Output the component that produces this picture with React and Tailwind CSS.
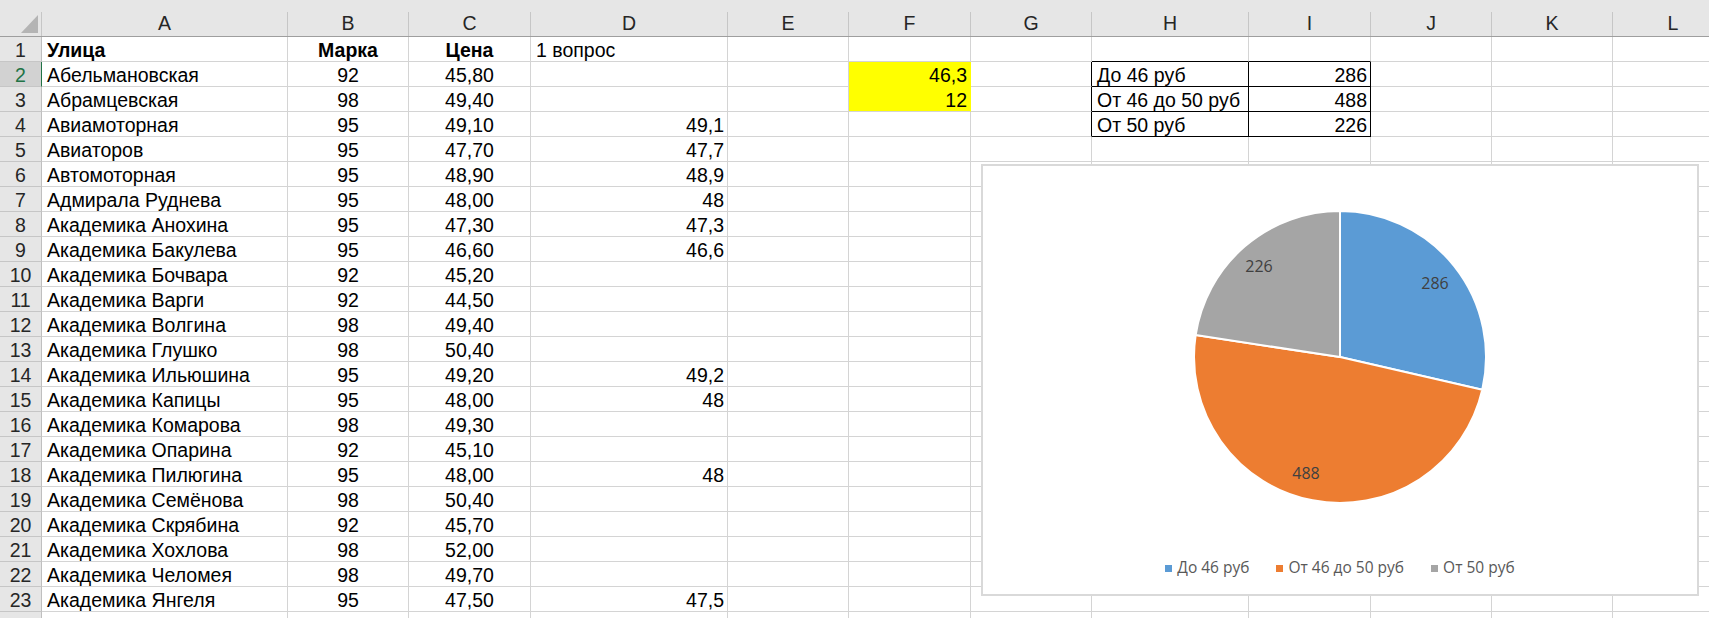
import React from "react";

const cols = ["A", "B", "C", "D", "E", "F", "G", "H", "I", "J", "K", "L"];

const rows = [
    ["Улица", "Марка", "Цена", "1 вопрос"],
    ["Абельмановская", "92", "45,80", ""],
    ["Абрамцевская", "98", "49,40", ""],
    ["Авиамоторная", "95", "49,10", "49,1"],
    ["Авиаторов", "95", "47,70", "47,7"],
    ["Автомоторная", "95", "48,90", "48,9"],
    ["Адмирала Руднева", "95", "48,00", "48"],
    ["Академика Анохина", "95", "47,30", "47,3"],
    ["Академика Бакулева", "95", "46,60", "46,6"],
    ["Академика Бочвара", "92", "45,20", ""],
    ["Академика Варги", "92", "44,50", ""],
    ["Академика Волгина", "98", "49,40", ""],
    ["Академика Глушко", "98", "50,40", ""],
    ["Академика Ильюшина", "95", "49,20", "49,2"],
    ["Академика Капицы", "95", "48,00", "48"],
    ["Академика Комарова", "98", "49,30", ""],
    ["Академика Опарина", "92", "45,10", ""],
    ["Академика Пилюгина", "95", "48,00", "48"],
    ["Академика Семёнова", "98", "50,40", ""],
    ["Академика Скрябина", "92", "45,70", ""],
    ["Академика Хохлова", "98", "52,00", ""],
    ["Академика Челомея", "98", "49,70", ""],
    ["Академика Янгеля", "95", "47,50", "47,5"],
    ["", "", "", ""],
];

const extra = {
    "2-F": "46,3",
    "3-F": "12",
    "2-H": "До 46 руб",
    "3-H": "От 46 до 50 руб",
    "4-H": "От 50 руб",
    "2-I": "286",
    "3-I": "488",
    "4-I": "226",
};

const legend = [
    { label: "До 46 руб", color: "bg-[#5b9bd5]" },
    { label: "От 46 до 50 руб", color: "bg-[#ed7d31]" },
    { label: "От 50 руб", color: "bg-[#a5a5a5]" },
];

const gridCols = "grid grid-cols-[42px_246px_121px_122px_197px_121px_122px_121px_157px_122px_121px_121px_121px]";

const cellText = (r, c) => {
    const row = rows[r - 1];
    if (c === "A") return row[0];
    if (c === "B") return row[1];
    if (c === "C") return row[2];
    if (c === "D") return row[3];
    return extra[`${r}-${c}`] || "";
};

const cellClass = (r, c) => {
    const inTable = r >= 2 && r <= 4 && (c === "H" || c === "I");
    const yellow = (r === 2 || r === 3) && c === "F";
    let right = "border-r-[#d4d4d4]";
    let bottom = "border-b-[#d4d4d4]";
    if (inTable) {
        right = "border-r-black";
        bottom = "border-b-black";
    }
    if (c === "G" && r >= 2 && r <= 4) right = "border-r-black";
    if (r === 1 && (c === "H" || c === "I")) bottom = "border-b-black";
    if (yellow) {
        right = "border-r-[#ffff00]";
        if (r === 2) bottom = "border-b-[#ffff00]";
    }

    let align = "justify-start pl-[5px]";
    if (c === "B" || c === "C") align = "justify-center";
    if (c === "D" && r > 1) align = "justify-end pr-[3px]";
    if (c === "F" || c === "I") align = "justify-end pr-[3px]";

    const bold = r === 1 && (c === "A" || c === "B" || c === "C") ? "font-bold" : "";
    const bg = yellow ? "bg-[#ffff00]" : "bg-white";

    return `h-[25px] border-r border-b ${right} ${bottom} ${bg} ${align} ${bold} flex items-end overflow-hidden whitespace-nowrap leading-[21px]`;
};

const PieChart = () => {
    return (
        <svg width="714" height="385" viewBox="0 0 714 385">
            <path d="M357,191 L357,45 A146,146 0 0 1 499.28,223.74 Z" fill="#5b9bd5" stroke="#ffffff" strokeWidth="2" strokeLinejoin="round" />
            <path d="M357,191 L499.28,223.74 A146,146 0 0 1 212.66,169.07 Z" fill="#ed7d31" stroke="#ffffff" strokeWidth="2" strokeLinejoin="round" />
            <path d="M357,191 L212.66,169.07 A146,146 0 0 1 357,45 Z" fill="#a5a5a5" stroke="#ffffff" strokeWidth="2" strokeLinejoin="round" />
            <g fontFamily="'Open Sans', sans-serif" fontSize="16" fill="#404040" textAnchor="middle" dominantBaseline="central">
                <text x="452" y="117">286</text>
                <text x="323" y="307">488</text>
                <text x="276" y="100">226</text>
            </g>
        </svg>
    );
};

const App = () => {
    return (
        <div className="relative w-[1709px] h-[618px] overflow-hidden bg-white font-['Liberation_Sans',Arial,sans-serif] text-[19.5px] text-black">
            {/* column header */}
            <div className={`${gridCols} h-[37px] bg-[#e6e6e6] border-b border-b-[#9e9e9e]`}>
                <div className="relative flex flex-col">
                    <div className="h-[12px]"></div>
                    <div className="flex-1 border-r border-r-[#c6c6c6]"></div>
                    <svg className="absolute left-[21px] top-[15px]" width="17" height="18" viewBox="0 0 17 18">
                        <polygon points="17,0 17,18 0,18" fill="#b4b4b4" />
                    </svg>
                </div>
                {cols.map((c) => (
                    <div key={c} className="flex flex-col">
                        <div className="h-[12px]"></div>
                        <div className="flex-1 border-r border-r-[#c6c6c6] flex items-center justify-center text-[#262626] leading-none">
                            {c}
                        </div>
                    </div>
                ))}
            </div>

            {/* rows */}
            {rows.map((row, i) => {
                const r = i + 1;
                const active = r === 2;
                return (
                    <div key={r} className={gridCols}>
                        <div className={`h-[25px] border-b border-b-[#c6c6c6] border-r flex items-end justify-center leading-[21px] ${active ? "bg-[#d2d2d2] text-[#217346] border-r-[#217346]" : "bg-[#e6e6e6] text-[#262626] border-r-[#bfbfbf]"}`}>
                            {r < 24 ? r : ""}
                        </div>
                        {cols.map((c) => (
                            <div key={c} className={cellClass(r, c)}>
                                {cellText(r, c)}
                            </div>
                        ))}
                    </div>
                );
            })}

            {/* chart */}
            <div className="absolute left-[981px] top-[164px] w-[718px] h-[432px] bg-white border-2 border-[#d9d9d9] flex flex-col">
                <PieChart />
                <div className="h-[34px] flex items-center justify-center gap-[27px] font-['Open_Sans',sans-serif] text-[15.5px] text-[#595959]">
                    {legend.map((item) => (
                        <div key={item.label} className="flex items-center gap-[5px]">
                            <span className={`w-[7px] h-[7px] ${item.color}`}></span>
                            <span>{item.label}</span>
                        </div>
                    ))}
                </div>
            </div>
        </div>
    );
};

export default App;
